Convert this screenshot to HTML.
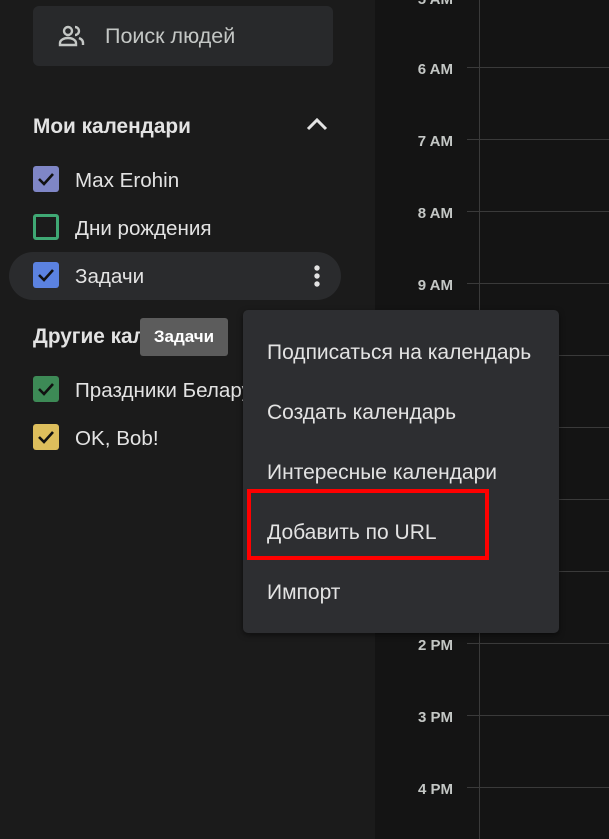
<!DOCTYPE html>
<html><head><meta charset="utf-8"><style>
*{margin:0;padding:0;box-sizing:border-box}
body{width:609px;height:839px;overflow:hidden;background:#1b1b1b;font-family:"Liberation Sans",Arial,sans-serif;position:relative;color:#e3e3e3}
.a{position:absolute}
.main{left:375px;top:0;width:234px;height:839px;background:#141414}
.hl{position:absolute;left:467px;width:142px;height:1px;background:#3a3a3a}
.vl{position:absolute;left:479px;top:0;width:1px;height:839px;background:#3a3a3a}
.t{position:absolute;left:390px;width:63px;text-align:right;font-size:15px;font-weight:bold;color:#c4c7c5}
.cb{position:absolute;left:33px;width:26px;height:26px;border-radius:3px}
.lbl{position:absolute;left:75px;font-size:20.6px;color:#e3e3e3}
.mi{position:absolute;left:267px;font-size:21px;color:#e3e3e3}
</style></head><body>
<div class="a main"></div>
<div class="vl"></div>
<div class="t" style="top:-9px">5 AM</div>
<div class="hl" style="top:67px"></div><div class="t" style="top:61px">6 AM</div>
<div class="hl" style="top:139px"></div><div class="t" style="top:133px">7 AM</div>
<div class="hl" style="top:211px"></div><div class="t" style="top:205px">8 AM</div>
<div class="hl" style="top:283px"></div><div class="t" style="top:277px">9 AM</div>
<div class="hl" style="top:355px"></div>
<div class="hl" style="top:427px"></div>
<div class="hl" style="top:499px"></div>
<div class="hl" style="top:571px"></div>
<div class="hl" style="top:643px"></div><div class="t" style="top:637px">2 PM</div>
<div class="hl" style="top:715px"></div><div class="t" style="top:709px">3 PM</div>
<div class="hl" style="top:787px"></div><div class="t" style="top:781px">4 PM</div>

<div class="a" style="left:33px;top:6px;width:300px;height:60px;background:#28292b;border-radius:6px"></div>
<svg class="a" style="left:58px;top:25px" width="28" height="22" viewBox="0 0 28 22"><g fill="none" stroke="#c4c7c5" stroke-width="2.4"><circle cx="10" cy="6" r="4"/><path d="M2 20v-2c0-3 4-5 8-5s8 2 8 5v2z"/><path d="M17 2a4 4 0 0 1 0 8M21 13c2 1 4 2 4 5v2"/></g></svg>
<div class="a" style="left:105px;top:24px;font-size:21.5px;color:#c4c7c5">Поиск людей</div>

<div class="a" style="left:33px;top:115px;font-size:20.8px;font-weight:bold">Мои календари</div>
<svg class="a" style="left:306px;top:117px" width="22" height="14" viewBox="0 0 22 14"><path d="M2 12L11 3l9 9" fill="none" stroke="#e3e3e3" stroke-width="3"/></svg>

<div class="a" style="left:9px;top:252px;width:332px;height:48px;background:#2a2b2d;border-radius:24px"></div>
<div class="cb" style="top:166px;background:#7f86c6"></div>
<div class="cb" style="top:214px;border:3px solid #3fa874"></div>
<div class="cb" style="top:262px;background:#5b82e0"></div>
<div class="cb" style="top:376px;background:#3d8a56"></div>
<div class="cb" style="top:424px;background:#ddbe5c"></div>
<svg class="a" style="left:33px;top:166px" width="26" height="300" viewBox="0 0 26 300"><g fill="none" stroke="#111" stroke-width="2.6"><path d="M6 13l5 5 9-10"/><path d="M6 109l5 5 9-10"/><path d="M6 223l5 5 9-10"/><path d="M6 271l5 5 9-10"/></g></svg>
<div class="lbl" style="top:169px">Max Erohin</div>
<div class="lbl" style="top:217px">Дни рождения</div>
<div class="lbl" style="top:265px">Задачи</div>
<svg class="a" style="left:311px;top:264px" width="12" height="26"><circle cx="6" cy="4" r="2.7" fill="#e3e3e3"/><circle cx="6" cy="12" r="2.7" fill="#e3e3e3"/><circle cx="6" cy="20" r="2.7" fill="#e3e3e3"/></svg>

<div class="a" style="left:33px;top:325px;font-size:20.8px;font-weight:bold">Другие календари</div>
<div class="a" style="left:140px;top:318px;width:88px;height:38px;background:#5c5c5c;border-radius:3px;font-size:17px;font-weight:bold;color:#fff;text-align:center;line-height:38px">Задачи</div>
<div class="lbl" style="top:379px;white-space:nowrap">Праздники Беларуси</div>
<div class="lbl" style="top:427px">OK, Bob!</div>

<div class="a" style="left:243px;top:310px;width:316px;height:323px;background:#2d2e31;border-radius:5px;box-shadow:0 2px 6px rgba(0,0,0,.5)"></div>
<div class="mi" style="top:341px">Подписаться на календарь</div>
<div class="mi" style="top:401px">Создать календарь</div>
<div class="mi" style="top:461px">Интересные календари</div>
<div class="mi" style="top:521px">Добавить по URL</div>
<div class="mi" style="top:581px">Импорт</div>
<div class="a" style="left:247px;top:489px;width:242px;height:71px;border:4px solid #ff0000"></div>
</body></html>
